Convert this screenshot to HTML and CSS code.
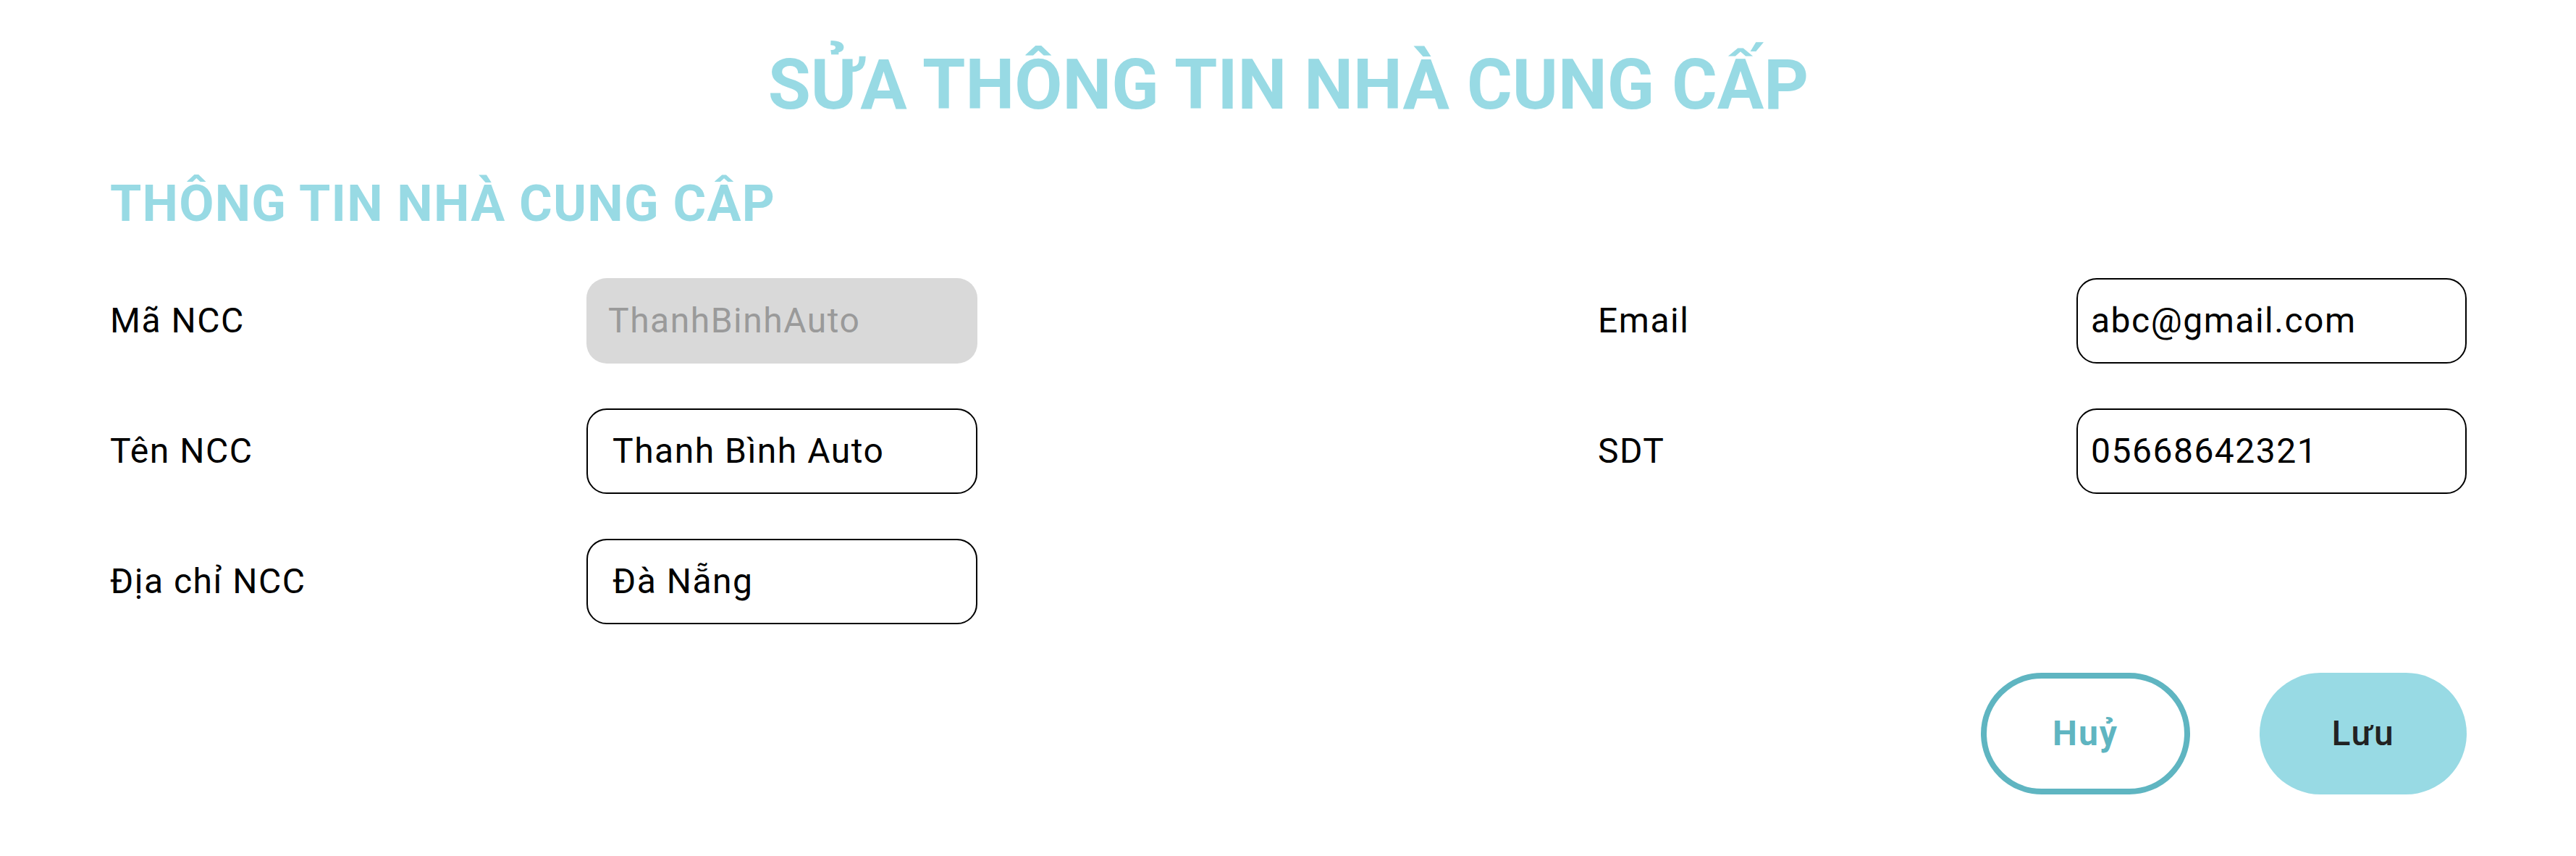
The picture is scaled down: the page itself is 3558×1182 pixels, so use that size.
FILE: index.html
```html
<!DOCTYPE html>
<html lang="vi">
<head>
<meta charset="utf-8">
<title>Sửa thông tin nhà cung cấp</title>
<link rel="stylesheet" href="styles.css">
</head>
<body>
<main class="page">
  <h1 class="title">SỬA THÔNG TIN NHÀ CUNG CẤP</h1>
  <h2 class="section-title">THÔNG TIN NHÀ CUNG CÂP</h2>
  <form class="form">
    <div class="col col-left">
      <label class="label" for="ma">Mã NCC</label>
      <input class="field field-disabled" id="ma" type="text" value="ThanhBinhAuto" readonly>
      <label class="label" for="ten">Tên NCC</label>
      <input class="field" id="ten" type="text" value="Thanh Bình Auto">
      <label class="label" for="diachi">Địa chỉ NCC</label>
      <input class="field" id="diachi" type="text" value="Đà Nẵng">
    </div>
    <div class="col col-right">
      <label class="label" for="email">Email</label>
      <input class="field field-right" id="email" type="text" value="abc@gmail.com">
      <label class="label" for="sdt">SDT</label>
      <input class="field field-right" id="sdt" type="text" value="05668642321">
    </div>
  </form>
  <div class="actions">
    <button class="btn btn-cancel" type="button">Huỷ</button>
    <button class="btn btn-save" type="button">Lưu</button>
  </div>
</main>
</body>
</html>
```
FILE: styles.css
```css
* {
  box-sizing: border-box;
}

html, body {
  margin: 0;
  padding: 0;
  background: #ffffff;
}

body {
  font-family: Roboto, "Noto Sans", "Liberation Sans", sans-serif;
  color: #000000;
}

.page {
  padding: 0 151px 0 152px;
}

.title {
  margin: 61px 0 0;
  font-size: 96px;
  line-height: 1.172;
  font-weight: 700;
  color: #98dae4;
  text-align: center;
}

.section-title {
  margin: 66px 0 0;
  font-size: 70px;
  line-height: 1.172;
  font-weight: 700;
  letter-spacing: 1.2px;
  color: #98dae4;
}

.form {
  margin-top: 62px;
  display: flex;
  justify-content: space-between;
  align-items: flex-start;
}

.col {
  display: grid;
  row-gap: 62px;
  align-items: center;
}

.col-left {
  grid-template-columns: 658px 540px;
}

.col-right {
  grid-template-columns: 661px 539px;
}

.label {
  font-size: 48px;
  font-weight: 400;
  letter-spacing: 1.5px;
  color: #000000;
}

.field {
  width: 100%;
  height: 118px;
  border: 2.5px solid #000000;
  border-radius: 28px;
  background: #ffffff;
  padding: 0 16px 0 34px;
  font-family: Roboto, "Noto Sans", "Liberation Sans", sans-serif;
  font-size: 48px;
  letter-spacing: 1.5px;
  color: #000000;
  outline: none;
}

.field-right {
  padding-left: 18px;
}

.field-disabled {
  border: none;
  background: #d9d9d9;
  color: #9a9a9a;
  padding-left: 30px;
}

.actions {
  margin-top: 67px;
  display: flex;
  justify-content: flex-end;
  gap: 96px;
}

.btn {
  height: 168px;
  border-radius: 84px;
  font-family: Roboto, "Noto Sans", "Liberation Sans", sans-serif;
  font-size: 48px;
  letter-spacing: 2px;
  cursor: pointer;
}

.btn-cancel {
  width: 289px;
  border: 8px solid #5fb5c1;
  background: #ffffff;
  color: #5fb5c1;
  font-weight: 700;
}

.btn-save {
  width: 286px;
  border: none;
  background: #98dae4;
  color: #222222;
  font-weight: 500;
}
```
